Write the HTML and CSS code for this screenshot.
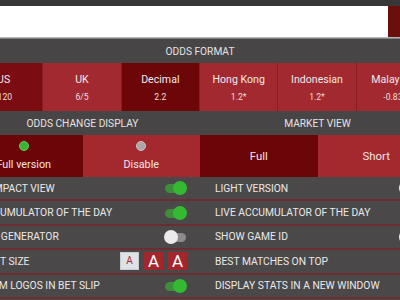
FILE: index.html
```html
<!DOCTYPE html>
<html>
<head>
<meta charset="utf-8">
<link rel="stylesheet" href="styles.css">
</head>
<body>
<div class="topbar"></div>
<div class="search">
  <div class="search-input"></div>
  <div class="search-btn"></div>
</div>
<div class="search-shadow"></div>
<div class="panel">
  <div class="section-title">ODDS FORMAT</div>
  <div class="odds">
    <div class="odd sel-hi"><span class="name">US</span><span class="val">-120</span></div>
    <div class="odd"><span class="name">UK</span><span class="val">6/5</span></div>
    <div class="odd sel"><span class="name">Decimal</span><span class="val">2.2</span></div>
    <div class="odd"><span class="name">Hong Kong</span><span class="val">1.2*</span></div>
    <div class="odd"><span class="name">Indonesian</span><span class="val">1.2*</span></div>
    <div class="odd"><span class="name">Malaysian</span><span class="val">-0.833</span></div>
  </div>
  <div class="cols">
    <div class="col">
      <div class="section-title">ODDS CHANGE DISPLAY</div>
      <div class="opts">
        <div class="opt sel"><span class="dot on"></span><span>Full version</span></div>
        <div class="opt"><span class="dot"></span><span>Disable</span></div>
      </div>
      <div class="row"><span>COMPACT VIEW</span><span class="toggle on"></span></div>
      <div class="row"><span>ACCUMULATOR OF THE DAY</span><span class="toggle on"></span></div>
      <div class="row"><span>BET GENERATOR</span><span class="toggle"></span></div>
      <div class="row"><span>FONT SIZE</span>
        <span class="sizes"><span class="sz small">A</span><span class="sz">A</span><span class="sz">A</span></span>
      </div>
      <div class="row"><span>TEAM LOGOS IN BET SLIP</span><span class="toggle on"></span></div>
    </div>
    <div class="col">
      <div class="section-title">MARKET VIEW</div>
      <div class="opts">
        <div class="opt sel big"><span>Full</span></div>
        <div class="opt big"><span>Short</span></div>
      </div>
      <div class="row"><span>LIGHT VERSION</span><span class="toggle"></span></div>
      <div class="row"><span>LIVE ACCUMULATOR OF THE DAY</span><span class="toggle on"></span></div>
      <div class="row"><span>SHOW GAME ID</span><span class="toggle"></span></div>
      <div class="row"><span>BEST MATCHES ON TOP</span><span class="toggle on"></span></div>
      <div class="row"><span>DISPLAY STATS IN A NEW WINDOW</span><span class="toggle on"></span></div>
    </div>
  </div>
</div>
</body>
</html>
```
FILE: styles.css
```css
html, body {
  margin: 0;
  padding: 0;
}
body {
  width: 400px;
  height: 300px;
  overflow: hidden;
  background: #4a4848;
  font-family: Roboto, "Liberation Sans", sans-serif;
  color: #eeeaea;
}
.topbar {
  height: 6px;
  background: #383737;
}
.search {
  display: flex;
  height: 31px;
  background: #383737;
}
.search-input {
  width: 388px;
  background: #ffffff;
}
.search-btn {
  flex: 1;
  background: #6a0f0b;
}
.search-shadow {
  height: 2px;
  background: linear-gradient(#cfcfcf, #6a6868);
}
.panel {
  margin-left: -35px;
  width: 470px;
}
.section-title {
  height: 24px;
  display: flex;
  align-items: center;
  justify-content: center;
  font-size: 10.2px;
  color: #e6e3e3;
  background: #474545;
}
.odds {
  display: grid;
  grid-template-columns: repeat(6, 1fr);
  height: 48px;
}
.odd {
  display: flex;
  flex-direction: column;
  align-items: center;
  justify-content: center;
  gap: 6px;
  background: #a2292f;
  border-right: 1px solid #8a1d22;
}
.odd.sel { background: #6c0609; }
.odd.sel-hi { background: #7b0d12; }
.odd .name { font-size: 10.6px; }
.odd .val { font-size: 8.6px; color: #f0dede; }
.cols {
  display: grid;
  grid-template-columns: 1fr 1fr;
}
.opts {
  display: grid;
  grid-template-columns: 1fr 1fr;
  height: 42px;
}
.opt {
  display: flex;
  flex-direction: column;
  align-items: center;
  justify-content: center;
  gap: 7px;
  background: #a4292f;
  font-size: 10.8px;
  color: #f2e4e4;
}
.opt.sel { background: #6c0508; }
.opt.big { font-size: 11.4px; }
.dot {
  width: 8px;
  height: 8px;
  border-radius: 50%;
  background: #a9a7a7;
  border: 1px solid #c9c5c5;
}
.dot.on {
  background: #36b634;
  border-color: #6ccd5e;
}
.row {
  height: 22.4px;
  border-bottom: 2px solid #6b2d31;
  display: flex;
  align-items: center;
  justify-content: space-between;
  padding: 0 14px 0 15px;
  font-size: 10.3px;
  color: #ebe8e8;
}
.toggle {
  position: relative;
  width: 22px;
  height: 14px;
}
.toggle::before {
  content: "";
  position: absolute;
  left: 1px;
  right: 0;
  top: 3px;
  height: 9px;
  border-radius: 5px;
  background: #8c8a8a;
}
.toggle::after {
  content: "";
  position: absolute;
  left: 0;
  top: 0;
  width: 14px;
  height: 14px;
  border-radius: 50%;
  background: #ebebeb;
}
.toggle.on::before { background: #3e8d39; }
.toggle.on::after {
  left: auto;
  right: -1px;
  background: #34b932;
}
.sizes {
  display: flex;
  gap: 5px;
  margin-right: -1px;
}
.sz {
  width: 19px;
  height: 18px;
  display: flex;
  align-items: center;
  justify-content: center;
  background: #a2262c;
  color: #ffffff;
  font-size: 17px;
  line-height: 1;
}
.sz.small {
  background: #dde2e7;
  color: #a2262c;
  font-size: 10px;
  border: 1px solid #c8ccd0;
  box-sizing: border-box;
}
```
